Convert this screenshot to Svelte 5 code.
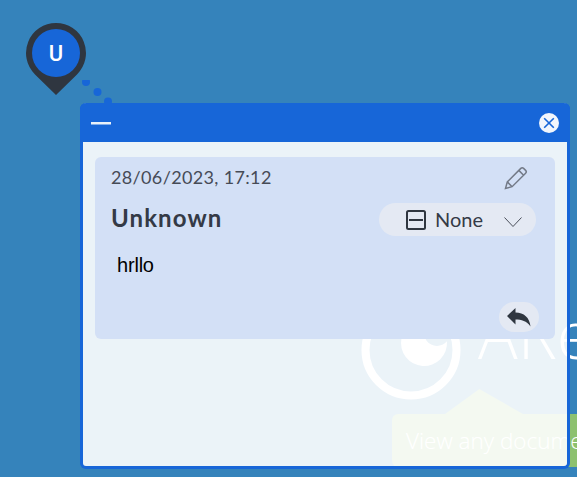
<script>
  let note = {
    date: '28/06/2023, 17:12',
    author: 'Unknown',
    status: 'None',
    text: 'hrllo'
  };
</script>

<div class="desktop">
  <div class="brand">
    <svg class="brand__mark" width="100" height="100" viewBox="0 0 100 100">
      <circle cx="50" cy="50" r="45.500" fill="none" stroke="#fff" stroke-width="8" />
      <path d="M70.450 21.230A23 23 0 1 0 85.950 41.370A13 13 0 1 1 70.450 21.230z" fill="#fff" />
    </svg>
    <span class="brand__name">ARender</span>
  </div>
  <div class="callout">View any document</div>

  <svg class="pin__links" width="50" height="40" viewBox="0 0 50 40">
    <circle cx="6" cy="2" r="4" />
    <circle cx="17.500" cy="12" r="4" />
    <circle cx="28" cy="21.500" r="4" />
  </svg>

  <div class="pin">
    <svg class="pin__shape" width="60" height="73" viewBox="0 0 60 73">
      <path d="M30 0a30 30 0 0 1 21 51.400L30 72 9 51.400A30 30 0 0 1 30 0z" />
    </svg>
    <span class="pin__badge">U</span>
  </div>

  <section class="window">
    <header class="window__bar">
      <span class="window__minimize"></span>
      <span class="window__close">
        <svg width="12" height="12" viewBox="0 0 12 12">
          <path d="M1.200 1.200l9.600 9.600M10.800 1.200l-9.600 9.600" />
        </svg>
      </span>
    </header>

    <div class="window__body">
      <article class="note">
        <div class="note__top">
          <span class="note__date">{note.date}</span>
          <svg class="note__edit" width="24" height="24" viewBox="0 0 24 24">
            <path d="M1.500 22.500l1.800-6.600L16.800 2.400a2 2 0 0 1 2.800 0l2 2a2 2 0 0 1 0 2.800L8.100 20.700zM3.300 15.900l4.800 4.800M14.800 4.400l4.800 4.800" />
          </svg>
        </div>

        <div class="note__row">
          <span class="note__author">{note.author}</span>
          <div class="status">
            <svg class="status__icon" width="20" height="20" viewBox="0 0 20 20">
              <rect x="1" y="1" width="18" height="18" rx="1.500" />
              <path d="M3 10h14" />
            </svg>
            <span class="status__label">{note.status}</span>
            <svg class="status__chevron" width="18" height="10" viewBox="0 0 18 10">
              <path d="M0.500 0.500l8.500 9 8.500-9" />
            </svg>
          </div>
        </div>

        <p class="note__text">{note.text}</p>

        <div class="note__actions">
          <span class="reply">
            <svg width="24" height="19" viewBox="0 0 24 19">
              <path d="M8.500 0L0 8l8.500 8.500v-5c6 0 11 1.500 15 7C22.500 9.500 17 4.500 8.500 4.500z" />
            </svg>
          </span>
        </div>
      </article>
    </div>
  </section>
</div>

<style>
  :global(body) {
    margin: 0;
  }

  .desktop {
    position: relative;
    width: 577px;
    height: 477px;
    overflow: hidden;
    background: #3583bb;
    font-family: Lato, sans-serif;
  }

  .brand {
    position: absolute;
    left: 361px;
    top: 300px;
    display: flex;
    align-items: flex-start;
    gap: 17px;
    color: #fff;
  }

  .brand__mark {
    display: block;
    flex: none;
  }

  .brand__name {
    font-family: "Open Sans", sans-serif;
    font-weight: 300;
    font-size: 66px;
    line-height: 67px;
  }

  .callout {
    position: absolute;
    left: 392px;
    top: 414px;
    width: 300px;
    height: 53px;
    box-sizing: border-box;
    padding-left: 14px;
    background: #8dc16f;
    border-radius: 6px;
    color: #fff;
    font-family: "Open Sans", sans-serif;
    font-weight: 300;
    font-size: 22.500px;
    line-height: 53px;
    white-space: nowrap;
  }

  .callout::before {
    content: '';
    position: absolute;
    left: 53px;
    top: -25px;
    width: 78px;
    height: 25px;
    background: #8dc16f;
    clip-path: polygon(0 100%, 44% 0, 100% 100%);
  }

  .pin {
    position: absolute;
    left: 26px;
    top: 23px;
    width: 60px;
    height: 73px;
  }

  .pin__shape {
    display: block;
    fill: #2f3640;
  }

  .pin__badge {
    position: absolute;
    left: 6px;
    top: 6px;
    width: 48px;
    height: 48px;
    border-radius: 50%;
    background: #1766d8;
    color: #fff;
    font-family: Roboto, sans-serif;
    font-weight: 500;
    font-size: 22px;
    line-height: 49px;
    text-align: center;
  }

  .pin__links {
    position: absolute;
    left: 80px;
    top: 80px;
    fill: #1766d8;
  }

  .window {
    position: absolute;
    left: 80px;
    top: 103px;
    width: 490px;
    height: 366px;
    box-sizing: border-box;
    display: flex;
    flex-direction: column;
    border: 3px solid #1766d8;
    border-top: none;
    border-radius: 6px;
    background: rgba(255, 255, 255, 0.9);
  }

  .window__bar {
    flex: none;
    height: 39px;
    margin: 0 -3px;
    padding: 0 11px;
    display: flex;
    align-items: center;
    justify-content: space-between;
    background: #1766d8;
    border-radius: 6px 6px 0 0;
  }

  .window__minimize {
    width: 20px;
    height: 2px;
    margin-top: 1px;
    background: #e9f1f9;
    box-shadow: 0 1px 0 rgba(233, 241, 249, 0.5);
  }

  .window__close {
    width: 20px;
    height: 20px;
    border-radius: 50%;
    background: #f2f6fc;
    display: flex;
    align-items: center;
    justify-content: center;
  }

  .window__close svg {
    fill: none;
    stroke: #1766d8;
    stroke-width: 1.6;
  }

  .window__body {
    flex: 1;
    padding: 15px 12px;
  }

  .note {
    height: 182px;
    box-sizing: border-box;
    padding: 8px 16px 7px;
    display: flex;
    flex-direction: column;
    background: #d3e0f6;
    border-radius: 6px;
  }

  .note__top {
    display: flex;
    align-items: center;
    justify-content: space-between;
    padding-right: 11px;
    height: 26px;
  }

  .note__date {
    padding-bottom: 2px;
    font-size: 18px;
    letter-spacing: 0.35px;
    color: #464b56;
  }

  .note__edit {
    fill: none;
    stroke: #737a87;
    stroke-width: 1.5;
  }

  .note__row {
    display: flex;
    align-items: center;
    justify-content: space-between;
    margin-top: 12px;
  }

  .note__author {
    padding-bottom: 4px;
    font-size: 24px;
    font-weight: 700;
    letter-spacing: 1.1px;
    color: #343a46;
  }

  .status {
    width: 157px;
    height: 33px;
    box-sizing: border-box;
    margin-right: 3px;
    padding: 0 14px 0 27px;
    display: flex;
    align-items: center;
    gap: 9px;
    border-radius: 17px;
    background: #e4e9f3;
    font-size: 20px;
    color: #343a46;
  }

  .status__label {
    padding-bottom: 2px;
  }

  .status__icon {
    flex: none;
    fill: none;
    stroke: #2f3640;
    stroke-width: 2;
  }

  .status__chevron {
    flex: none;
    margin: 4px 0 0 auto;
    fill: none;
    stroke: #4a4f5a;
    stroke-width: 1;
  }

  .note__text {
    margin: 18px 0 0 6px;
    font-family: "Liberation Sans", sans-serif;
    font-size: 20px;
    letter-spacing: -0.2px;
    color: #000;
  }

  .note__actions {
    margin-top: auto;
    display: flex;
    justify-content: flex-end;
  }

  .reply {
    width: 40px;
    height: 30px;
    border-radius: 15px;
    background: #e4e9f3;
    display: flex;
    align-items: center;
    justify-content: center;
  }

  .reply svg {
    fill: #2f3640;
  }
</style>
